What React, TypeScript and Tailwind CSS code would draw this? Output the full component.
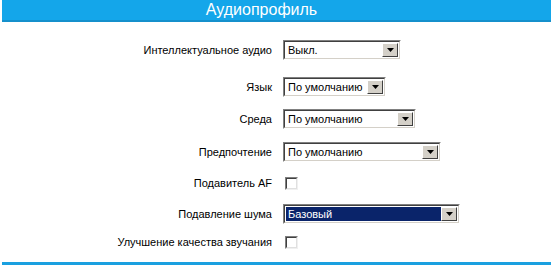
import React from "react";

function Arrow() {
  return (
    <div className="w-[16px] h-full bg-[#d4d0c8] border border-t-[#ffffff] border-l-[#ffffff] border-r-[#404040] border-b-[#404040] flex items-center justify-center shrink-0">
      <svg width="7" height="4" viewBox="0 0 7 4">
        <polygon points="0,0 7,0 3.5,4" fill="#000" />
      </svg>
    </div>
  );
}

function Select({ w, text, selected }: { w: number; text: string; selected?: boolean }) {
  return (
    <div
      className="h-[20px] border border-t-[#808080] border-l-[#808080] border-r-[#ffffff] border-b-[#ffffff]"
      style={{ width: w }}
    >
      <div className="h-full w-full border border-t-[#404040] border-l-[#404040] border-r-[#d4d0c8] border-b-[#d4d0c8] bg-white flex p-px">
        <div
          className={
            "flex-1 min-w-0 overflow-hidden whitespace-nowrap flex items-center pl-[2px] text-[11px] leading-none " +
            (selected ? "bg-[#0a246a] text-white" : "text-black")
          }
        >
          {text}
        </div>
        <Arrow />
      </div>
    </div>
  );
}

function Check() {
  return (
    <div className="ml-[2px] w-[13px] h-[13px] border border-t-[#808080] border-l-[#808080] border-r-[#f0f0f0] border-b-[#f0f0f0]">
      <div className="w-full h-full border border-t-[#404040] border-l-[#404040] border-r-[#e0e0e0] border-b-[#e0e0e0] bg-white" />
    </div>
  );
}

function Row({ label, mt, children }: { label: string; mt: string; children: React.ReactNode }) {
  return (
    <div className={"flex items-center h-[20px] " + mt}>
      <div className="w-[272px] text-right text-[11px] text-black whitespace-nowrap">{label}</div>
      <div className="ml-[11px] flex items-center">{children}</div>
    </div>
  );
}

export default function App() {
  return (
    <div
      className="w-[553px] h-[265px] bg-white overflow-hidden"
      style={{ fontFamily: '"Liberation Sans", Arial, sans-serif' }}
    >
      <div className="mx-[2px] h-[22px] bg-[#14a6ea] border-b-2 border-b-[#1590cc] flex items-center justify-center pr-[30px] text-white text-[16px] leading-none">
        Аудиопрофиль
      </div>
      <div className="flex flex-col">
        <Row label="Интеллектуальное аудио" mt="mt-[18px]">
          <Select w={118} text="Выкл." />
        </Row>
        <Row label="Язык" mt="mt-[17px]">
          <Select w={103} text="По умолчанию" />
        </Row>
        <Row label="Среда" mt="mt-[12px]">
          <Select w={133} text="По умолчанию" />
        </Row>
        <Row label="Предпочтение" mt="mt-[13px]">
          <Select w={158} text="По умолчанию" />
        </Row>
        <Row label="Подавитель AF" mt="mt-[11px]">
          <Check />
        </Row>
        <Row label="Подавление шума" mt="mt-[11px]">
          <Select w={177} text="Базовый" selected />
        </Row>
        <Row label="Улучшение качества звучания" mt="mt-[8px]">
          <Check />
        </Row>
      </div>
      <div className="mx-[2px] mt-[10px] h-[3px] bg-[#1aa0e0]" />
    </div>
  );
}
